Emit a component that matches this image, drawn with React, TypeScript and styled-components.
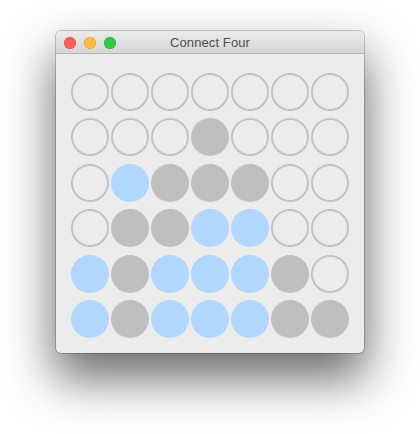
import React from "react";
import styled, { createGlobalStyle } from "styled-components";

const Global = createGlobalStyle`
  html, body { margin: 0; padding: 0; background: #ffffff; }
  body { font-family: "Liberation Sans", Arial, sans-serif; }
`;

const Page = styled.div`
  width: 420px;
  height: 434px;
  padding: 31px 0 0 56px;
  box-sizing: border-box;
`;

const Window = styled.div`
  width: 308px;
  height: 322px;
  border-radius: 5px;
  background: #ececec;
  overflow: hidden;
  box-shadow: 0 24px 48px 2px rgba(0, 0, 0, 0.58), 0 0 0 1px rgba(0, 0, 0, 0.2);
  display: flex;
  flex-direction: column;
`;

const TitleBar = styled.div`
  height: 22px;
  flex: 0 0 auto;
  position: relative;
  display: flex;
  align-items: center;
  justify-content: center;
  background: linear-gradient(#ebebeb, #d6d6d6);
  border-bottom: 1px solid #b4b4b4;
`;

const Lights = styled.div`
  position: absolute;
  left: 8px;
  top: 6px;
  display: flex;
  gap: 8px;
`;

const Light = styled.span<{ $c: string; $b: string }>`
  width: 12px;
  height: 12px;
  border-radius: 50%;
  background: ${(p) => p.$c};
  box-shadow: inset 0 0 0 0.5px ${(p) => p.$b};
`;

const Title = styled.div`
  font-size: 13px;
  color: #4d4d4d;
  letter-spacing: 0.1px;
`;

const Board = styled.div`
  flex: 1;
  padding: 19px 15px 15px 15px;
  display: flex;
  flex-direction: column;
  justify-content: space-between;
`;

const Row = styled.div`
  display: flex;
  gap: 2px;
`;

type Kind = "E" | "G" | "B";

const Cell = styled.div<{ $k: Kind }>`
  width: 38px;
  height: 38px;
  border-radius: 50%;
  box-sizing: border-box;
  background: ${(p) => (p.$k === "E" ? "transparent" : p.$k === "G" ? "#bfbfbf" : "#b1d6ff")};
  border: ${(p) => (p.$k === "E" ? "2px solid #c2c2c2" : "none")};
`;

const board: Kind[][] = [
  "EEEEEEE",
  "EEEGEEE",
  "EBGGGEE",
  "EGGBBEE",
  "BGBBBGE",
  "BGBBBGG",
].map((r) => r.split("") as Kind[]);

export default function App() {
  return (
    <Page>
      <Global />
      <Window>
        <TitleBar>
          <Lights>
            <Light $c="#fc605c" $b="#de4a45" />
            <Light $c="#fdbc40" $b="#de9f2f" />
            <Light $c="#34c84a" $b="#27a834" />
          </Lights>
          <Title>Connect Four</Title>
        </TitleBar>
        <Board>
          {board.map((row, i) => (
            <Row key={i}>
              {row.map((k, j) => (
                <Cell key={j} $k={k} />
              ))}
            </Row>
          ))}
        </Board>
      </Window>
    </Page>
  );
}
